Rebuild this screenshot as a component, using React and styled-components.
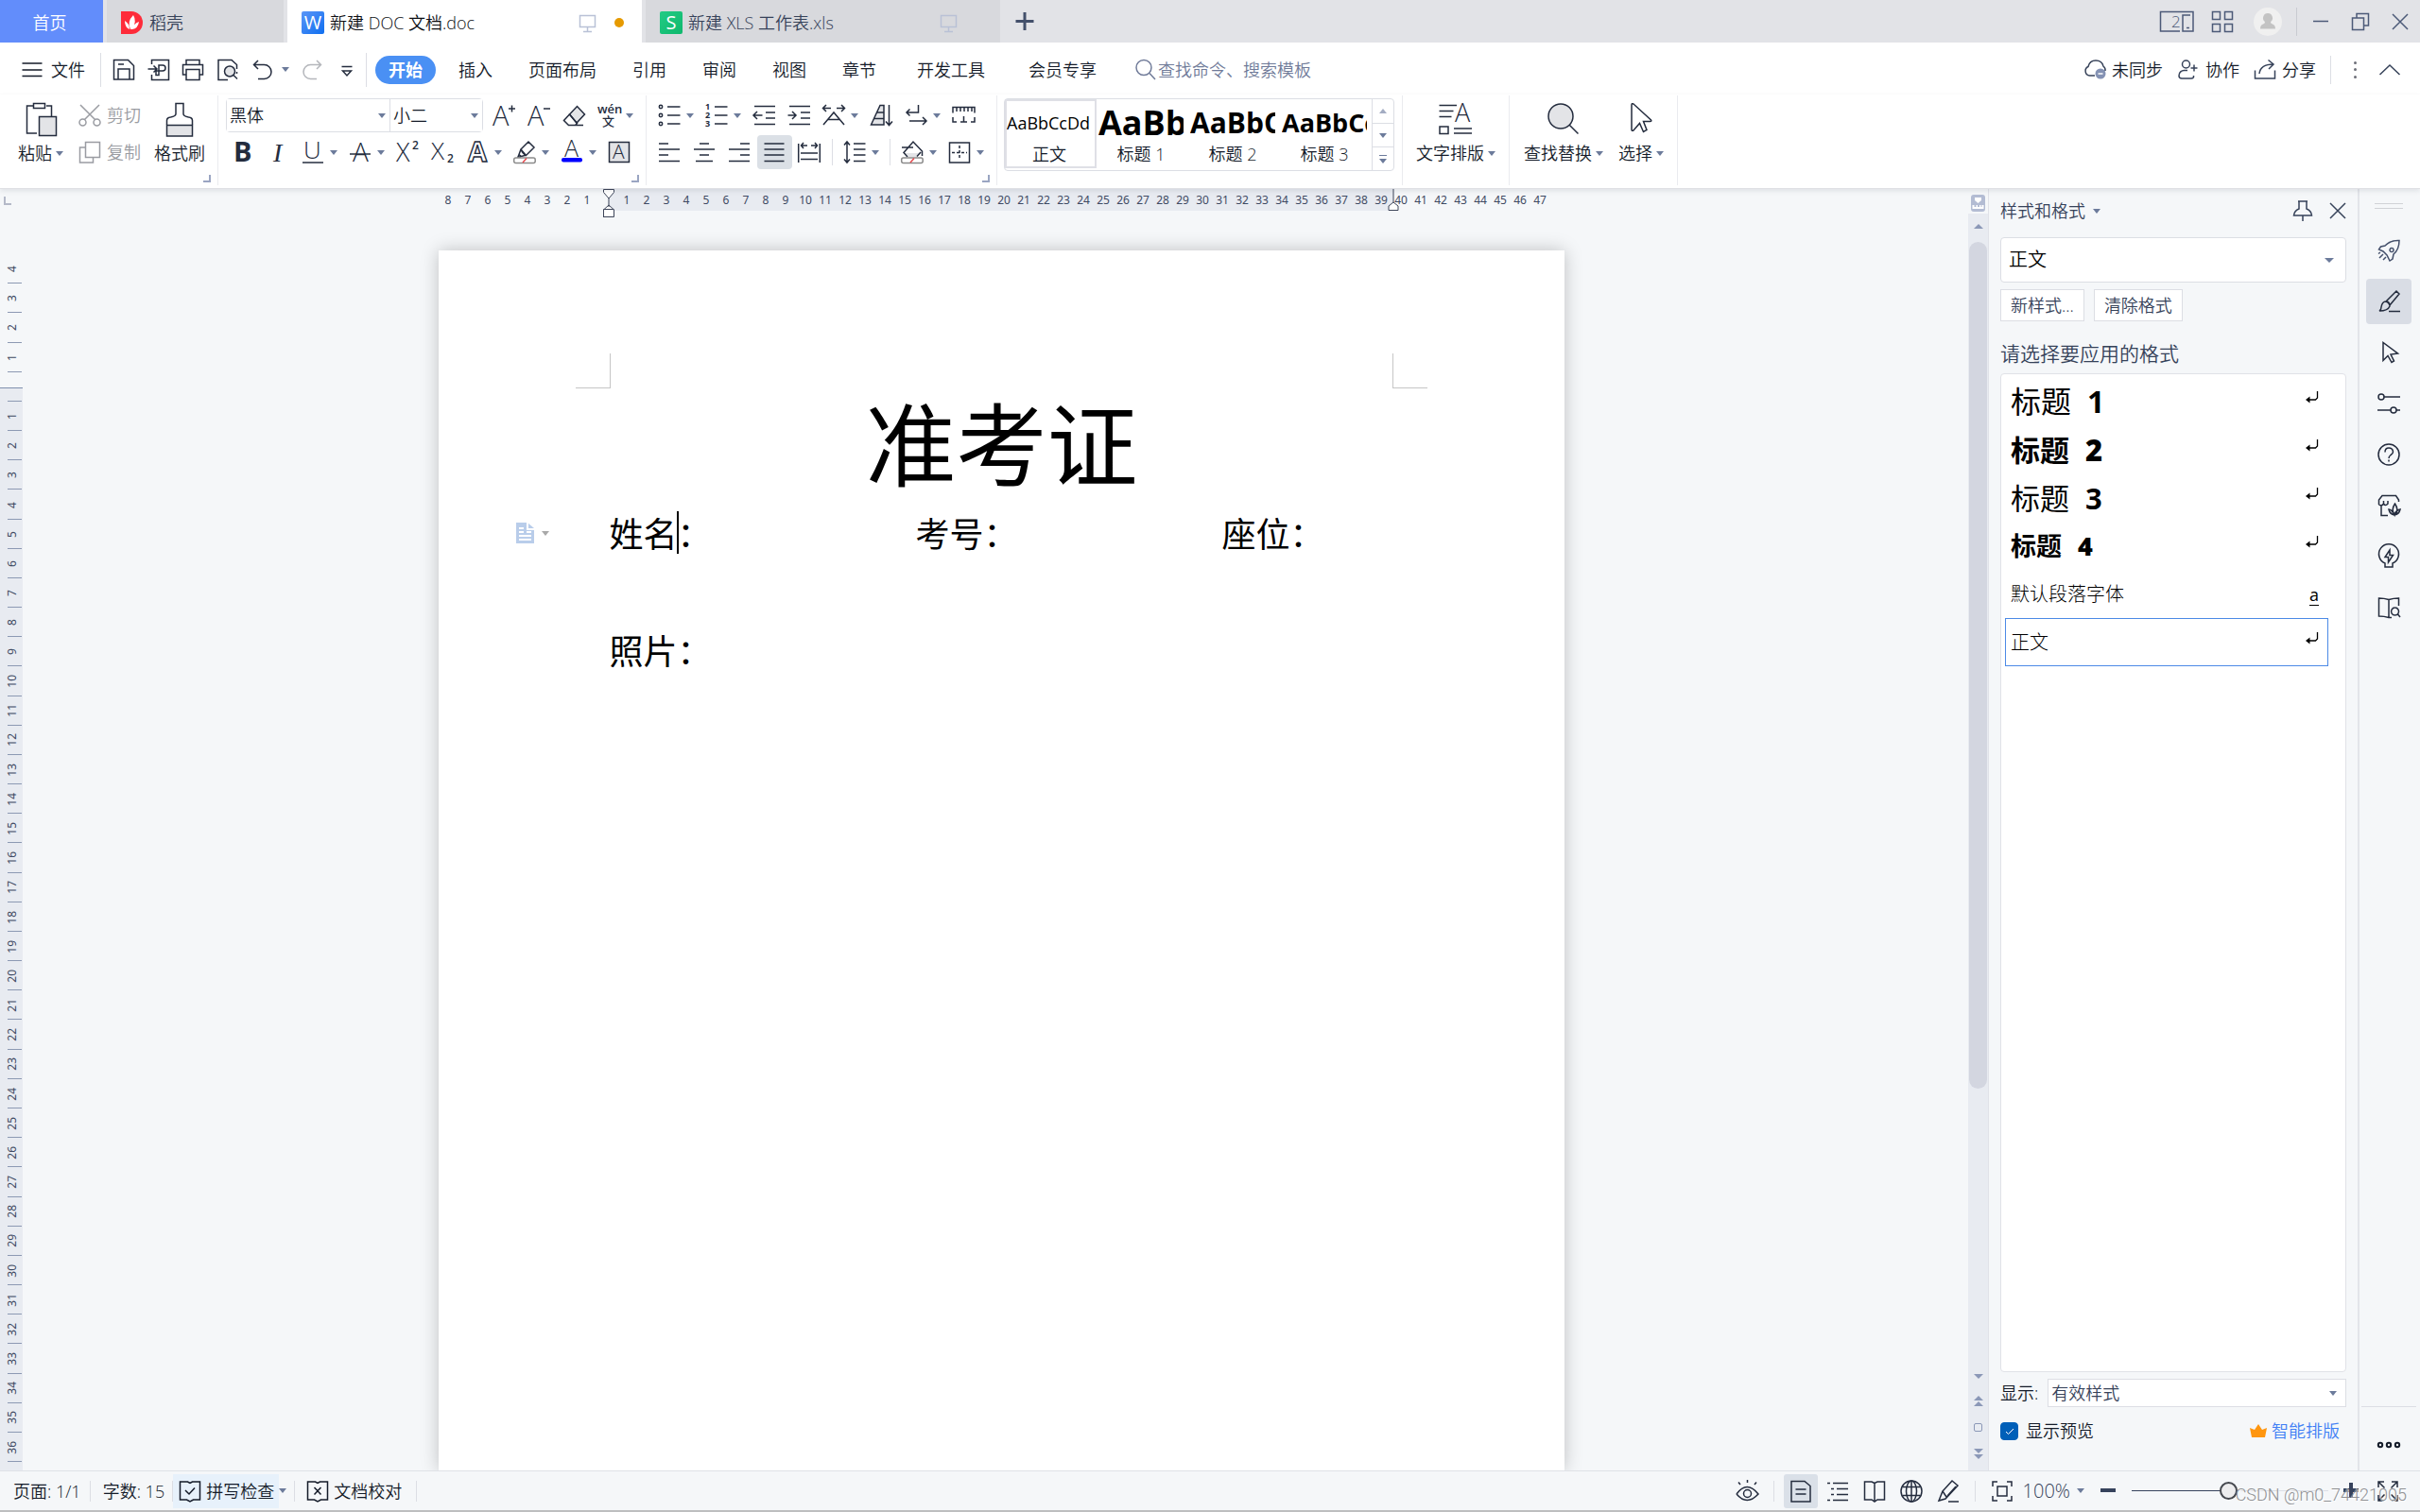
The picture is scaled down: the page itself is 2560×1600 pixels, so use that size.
import { useState } from 'react'
import styled, { createGlobalStyle, css } from 'styled-components'

const colors = {
  ink: '#242c3e',
  text: '#141b29',
  soft: '#364259',
  muted: '#707b99',
  caret: '#6c7b9b',
  disabled: '#9a9ca2',
  line: '#dcdee4',
  hair: '#eaebef',
  canvas: '#f5f7f9',
  band: '#e8ebf1',
  blue: '#4a90f4',
  home: '#628dfb',
}

const GlobalStyle = createGlobalStyle`
  * {
    box-sizing: border-box;
  }

  body {
    margin: 0;
    background: ${colors.canvas};
    color: ${colors.text};
    font: 350 18px/24px "Open Sans", "Noto Sans CJK SC", sans-serif;
  }

  button, input, select {
    font: inherit;
    color: inherit;
    border: 0;
    padding: 0;
    margin: 0;
    background: none;
  }

  h1, h2, p, ul {
    margin: 0;
    padding: 0;
    list-style: none;
    font-weight: inherit;
  }
`

/* ---------- icons ---------- */

const IconBase = styled.svg`
  display: block;
  flex: none;
  overflow: visible;
  fill: none;
  stroke: currentColor;
  stroke-width: ${({ $weight }) => $weight || 1.5};

  text {
    stroke: none;
    fill: currentColor;
    font-family: "Open Sans", "Noto Sans CJK SC", sans-serif;
    font-weight: 300;
  }
`

const SHADE = '#e3e4e7'

const icons = {
  menu: <path d="M1.5 5h21M1.5 12h21M1.5 18.500h21" />,
  save: <path d="M1.500 1.500h15l6 6v14.500h-21zM6 22V11h12v11M6 6h6" />,
  exportPdf: <path d="M4.500 6V1.500h18v21h-18V17M.5 11h9M6.500 7.500 10 11l-3.500 3.500M12 8.500V7h4q3 0 3 3t-3 3h-4v4.500h-3V13h3V8.500" />,
  print: <path d="M5 6V1.500h14V6M5 17H1.500V6.500h21V17H19M5 11.500h14v11H5z" />,
  preview: (
    <>
      <path d="M12 22.500H2V1.500h14l5.500 5V11M21.500 14v2" />
      <circle cx="14" cy="13.500" r="5.500" fill={SHADE} />
      <path d="m18 17.500 4 4" />
    </>
  ),
  undo: <path d="M7 2 2.500 6.500 7 11M3 6.500h10.500a7.500 7.500 0 0 1 0 15H7" />,
  redo: <path d="M17 2l4.500 4.500L17 11M21 6.500H10.500a7.500 7.500 0 0 0 0 15H17" />,
  more: <path d="M6.500 8.500h11M7.500 13l4.500 5 4.500-5z" />,
  search: (
    <>
      <circle cx="10" cy="9.500" r="8" />
      <path d="m16 15.500 6 6.500" />
    </>
  ),
  cloud: (
    <>
      <path d="M12 18H6.500a5 5 0 0 1-1.500-9.500Q6.500 2 13 2t8 6q2.500 2 2 5" />
      <circle cx="18" cy="16" r="5.500" fill="#8492b4" stroke="none" />
      <path d="M15.500 16h5" stroke="#fff" />
    </>
  ),
  person: <path d="M9.500 2a4 4 0 1 1 0 8 4 4 0 1 1 0-8M18 6.500v7M14.500 10h7M11 12.500H8a5.500 5.500 0 0 0-6 5.500q0 3 3 3h10q3 0 2.500-3" />,
  share: <path d="M1.500 12.500V21h21v-8.500M6 16Q7 6 21 6M15.500 1.500 21 6l-5 5" />,
  chevronUp: <path d="m1.500 17 10.500-10 10.500 10" />,
  paste: (
    <>
      <path d="M10 4H3.500v29H14M24 4h5.500v11" />
      <path d="M10.500 1.500h12v5h-12z" />
      <path d="M16.500 15.500h18v20h-18z" fill={SHADE} />
    </>
  ),
  cut: (
    <>
      <circle cx="4.500" cy="19.500" r="3.500" />
      <circle cx="19.500" cy="19.500" r="3.500" />
      <path d="M2 1l15.500 15.500M22 1 6.500 16.500" />
    </>
  ),
  copy: <path d="M7.500 1.500h15v16h-15zM7.500 7h-6v16h14v-5.500" />,
  brush: (
    <>
      <path d="M4.500 24v-4.500q0-3 4-3.500 5.500-1 5.500-3.500V1.500h8v11q0 2.500 5.500 3.500 4 .5 4 3.500V24" />
      <path d="M4.500 24.500h27v11.500h-27z" fill={SHADE} />
    </>
  ),
  grow: (
    <>
      <text x="0" y="23" fontSize="29">A</text>
      <path d="M17 5h7M20.500 1.500v7" />
    </>
  ),
  shrink: (
    <>
      <text x="0" y="23" fontSize="29">A</text>
      <path d="M17 5h7" />
    </>
  ),
  eraser: (
    <>
      <path d="m7.500 11 8-8.500 8 8.500-8.500 9z" fill={SHADE} />
      <path d="m7.500 11-6 6.500 5 5H22M7.500 11l8 9.500-2 2" />
    </>
  ),
  pinyin: (
    <>
      <text x="0" y="10" fontSize="13" style={{ fontWeight: 600 }}>wén</text>
      <text x="5" y="23" fontSize="13" style={{ fontWeight: 500 }}>文</text>
    </>
  ),
  bold: <text x="2" y="22" fontSize="29" style={{ fontWeight: 700 }}>B</text>,
  italic: <text x="7" y="22" fontSize="28" style={{ fontStyle: 'italic', fontFamily: 'Liberation Serif' }}>I</text>,
  underline: (
    <>
      <text x="2" y="19" fontSize="26">U</text>
      <path d="M1 23h22" />
    </>
  ),
  strike: (
    <>
      <text x="4" y="22" fontSize="28">A</text>
      <path d="M1 14h22" />
    </>
  ),
  superscript: (
    <>
      <text x="0" y="22" fontSize="27">X</text>
      <text x="17" y="9" fontSize="12" style={{ fontWeight: 600 }}>2</text>
    </>
  ),
  subscript: (
    <>
      <text x="0" y="20" fontSize="26">X</text>
      <text x="17" y="23" fontSize="12" style={{ fontWeight: 600 }}>2</text>
    </>
  ),
  outline: <text x="2" y="22" fontSize="29" style={{ fontWeight: 700, fill: '#fff', stroke: colors.ink, strokeWidth: 1.4 }}>A</text>,
  highlight: (
    <>
      <path d="m8 9 8-8 6 6-8.500 8.500zM8 9q2 5 5.500 6.500M8 9l-2 5.500 2.500 2L14 15M6 14.500 5 17h3" />
      <rect x=".7" y="18" width="22.500" height="5.500" rx="2" stroke="#8b8b8b" />
      <path d="m10 23 4-4.500" stroke="#e5484d" />
    </>
  ),
  fontColor: (
    <>
      <text x="4" y="17" fontSize="25">A</text>
      <rect x="1" y="18" width="22" height="4.500" rx="2" fill="#0000ff" stroke="none" />
    </>
  ),
  boxedA: (
    <>
      <path d="M1.500 1.500h21v21h-21z" fill={SHADE} />
      <text x="5" y="19" fontSize="21">A</text>
    </>
  ),
  bullets: (
    <>
      <circle cx="3" cy="3" r="1.700" />
      <circle cx="3" cy="12" r="1.700" />
      <circle cx="3" cy="21" r="1.700" />
      <path d="M10 3h13.500M10 12h13.500M10 21h13.500" />
    </>
  ),
  numbers: (
    <>
      <text x="0" y="6" fontSize="9" style={{ fontWeight: 700 }}>1</text>
      <text x="0" y="15" fontSize="9" style={{ fontWeight: 700 }}>2</text>
      <text x="0" y="24" fontSize="9" style={{ fontWeight: 700 }}>3</text>
      <path d="M10 3h13.500M10 12h13.500M10 21h13.500" />
    </>
  ),
  outdent: <path d="M2 2.500h22M14 9h10M14 15h10M2 21.500h22M10.500 12H1M5 8l-4 4 4 4" />,
  indent: <path d="M2 2.500h22M14 9h10M14 15h10M2 21.500h22M.5 12H9M5 8l4 4-4 4" />,
  scaleText: <path d="M1 22 12 9l11 13M6 16.500h12M9 4.500H1M4 1 .500 4.500 4 8M15 4.500h8M20 1l3.500 3.500L20 8" />,
  sort: (
    <>
      <path d="M1.500 22 11 1.500h4V22z" fill={SHADE} />
      <path d="M15 9H8M15 15.500H5M20.500 1v21M17 18.500l3.500 4 3.500-4" />
    </>
  ),
  wrap: <path d="M14.500 1v8H2M5.500 5.500 2 9l3.500 3.500M5 18h18M19 14l4 4-4 4" />,
  tabs: <path d="M1 9.500V3.500h23v6M5 4v4M9 4v4M13 4v4M17 4v4M21 4v4M1 14v5h4M12.500 13v6M9 19h7M24 14v5h-4" />,
  alignLeft: <path d="M1 3h10M1 9h22M1 15h10M1 21.500h22" />,
  alignCenter: <path d="M7 3h10M1 9h22M7 15h10M3 21.500h18" />,
  alignRight: <path d="M13 3h10M1 9h22M13 15h10M1 21.500h22" />,
  justify: <path d="M1.500 3h21M1.500 9h21M1.500 15h21M1.500 21.500h21" />,
  distribute: <path d="M.7 3v20M23.300 3v20M3 13h18M3 19.500h18M3.500 5H10M6 2 3.500 5 6 8M14 5h6.500M18 2l2.500 3L18 8" />,
  lineHeight: <path d="M4 1v22M1 4.500 4 1l3 3.500M1 19.500 4 23l3-3.500M11 3h12.500M11 9h12.500M11 15h12.500M11 21.500h12.500" />,
  bucket: (
    <>
      <path d="M4 13h17l-4 4H8z" fill={SHADE} stroke="none" />
      <path d="M7 17 3 12.500 13 1l9.500 10V16M1 7h12M21 12l-4 4.500" />
      <rect x=".7" y="18" width="22.500" height="5.500" rx="2" stroke="#8b8b8b" />
      <path d="m10 23 4-4.500" stroke="#e5484d" />
    </>
  ),
  borders: (
    <>
      <path d="M1.500 2h21v21h-21z" />
      <path d="M12 5v15M4 12.500h16" strokeDasharray="3 2" />
    </>
  ),
  typeset: (
    <>
      <path d="M.5 3.500H19M.5 9.500h15M.5 15.500h13M16 28h19M16 33h19M1 26h9v7.500H1z" />
      <text x="17" y="21" fontSize="27">A</text>
    </>
  ),
  find: (
    <>
      <circle cx="15" cy="15" r="13" fill={SHADE} />
      <path d="m24 24 9.500 9.500" />
    </>
  ),
  pointer: <path d="M8 3q0-2 2-1l18.500 17q1 1.500-1 1.500h-7l3.500 9-3.500 2-4-9-6.500 7.500q-2 1-2-1z" />,
  device: (
    <>
      <path d="M22 22H1.500V1.500h34.500V22H25V5h8" />
      <path d="M29 18.500h3" />
      <text x="13" y="18" fontSize="17">2</text>
    </>
  ),
  apps: <path d="M1.500 1.500h8v8h-8zM14.500 1.500h8v8h-8zM1.500 14.500h8v8h-8zM14.500 14.500h8v8h-8z" />,
  minimize: <path d="M4 11.500h16" />,
  restore: <path d="M3.500 8h12v12.500h-12zM8 8V3.500h12.500V16H16" />,
  close: <path d="m4 4 16 16M20 4 4 20" />,
  screen: <path d="M2.500 2.500h16v12h-16zM10.500 14.500v4.500M6 19.500h9" />,
  plus: <path d="M12 2v19M2.500 11.500h19" />,
  pin: <path d="M7 2h10M8 2v8q-5 2-5.500 7h19Q21 12 16 10V2M12 17v6" />,
  rocket: <path d="M8 7q6-6 15-5.500Q23 11 17 16l-1 5-3 2-3-6-4-4-4.500-2 2-3zM15 9.500a2 2 0 1 0 .1 0M6 16l-4 4M9 19l-3 3M3 14l-2 1.500" />,
  pen: <path d="m9 12 11-11 3 3-10 12M9 12q4 0 4 5-2 5-11 5 2-1 2-4 1-6 5-6M12 22.500h12M13 16q-1-3-4-4" />,
  arrow: <path d="M6 1.500v19l5-5 4 7 2.500-1.500-3.500-7 7.500-1z" />,
  sliders: (
    <>
      <circle cx="4" cy="5" r="3" />
      <circle cx="17" cy="19" r="3" />
      <path d="M7 5h17M0 19h14M20 19h4" />
    </>
  ),
  help: (
    <>
      <circle cx="12" cy="12" r="11" />
      <path d="M8 9.500q0-4.500 4-4.500t4.500 4q0 2-2.500 3.500-2 1.500-2 3.500M12 17.500v2" />
    </>
  ),
  store: <path d="M4 12v10.500h7M1.500 11V6L5 1.500h14.500l3 4.500v2M1.500 11q3 2 5-1 2 3 4.500 0V7M6.500 10V7M17.500 21q-3-5 1-11 4 6 1 11M18 22q-5-1-6-6 3 0 6 6 1-5 6-6-1 5-6 6z" />,
  bulb: <path d="M8 19a10.500 10.500 0 1 1 8 0v4H8zM13 5l-5 7.500h3.500V18l5-7.500h-3.500z" />,
  bookSearch: <path d="M12 3.500v19M12 3.500Q7 2 1.500 2v19Q7 21 12 22.500h3M12 3.500Q17 2 22.500 2v8M18.500 12a4 4 0 1 0 .1 0M21.500 19l2.500 3" />,
  dots: (
    <>
      <circle cx="3" cy="12" r="2.200" />
      <circle cx="12" cy="12" r="2.200" />
      <circle cx="21" cy="12" r="2.200" />
    </>
  ),
  spell: <path d="M9.500 2H1.500v19h7l3.500 2 3.500-2h7V2h-8L12 3.500zM7 11l4 4 6-6.500" />,
  proof: <path d="M9.500 2H1.500v19h7l3.500 2 3.500-2h7V2h-8L12 3.500zM8.500 8l7 7.500M15.500 8l-7 7.500" />,
  eye: (
    <>
      <path d="M1 15q11-15 23 0-12 13-23 0M12.500 3V0M5 5 3 2.500M20 5l2-2.500" />
      <circle cx="12.500" cy="14.500" r="4" />
    </>
  ),
  pageView: <path d="M2 1.500h14l6 5V23H2zM6.500 10h11M6.500 15h11" />,
  outlineView: <path d="M1 3.500h3M7 3.500h16M5 9.500h3M11 9.500h12M5 15.500h3M11 15.500h12M1 21.500h3M7 21.500h16" />,
  book: <path d="M12 3.500v19M12 3.500 9 2H1.500v19H9l3 2 3-2h7.500V2H15z" />,
  globe: (
    <>
      <circle cx="12" cy="12" r="11" />
      <ellipse cx="12" cy="12" rx="5.500" ry="11" />
      <path d="M12 1v22M2.500 7.500h19M2.500 16.500h19" />
    </>
  ),
  write: <path d="m6 12 10-11 6 5L9 20l-7 2zM6 12l4 6M11 17l9-10M12 23h11" />,
  fit: <path d="M2 7V2h5M17 2h5v5M22 17v5h-5M7 22H2v-5M7 7h10v10H7z" />,
  full: <path d="M2 8V2h6M16 2h6v6M22 16v6h-6M8 22H2v-6M2 2l6.500 6.500M22 2l-6.500 6.500M22 22l-6.500-6.500M2 22l6.500-6.500" />,
}

const Icon = ({ name, size = 24, width, weight }) => (
  <IconBase
    $weight={weight}
    width={width || size}
    height={size}
    viewBox={`0 0 ${width || size} ${size}`}
    aria-hidden="true"
  >
    {icons[name]}
  </IconBase>
)

const CaretSvg = styled.svg`
  display: block;
  flex: none;
  width: ${({ $big }) => ($big ? 10 : 8)}px;
  height: 5px;
  fill: ${({ $color }) => $color || colors.caret};
  transform: ${({ $up }) => ($up ? 'rotate(180deg)' : 'none')};
`

const Caret = props => (
  <CaretSvg viewBox="0 0 8 5" preserveAspectRatio="none" aria-hidden="true" {...props}>
    <path d="M0 0h8L4 5z" />
  </CaretSvg>
)

/* ---------- title bar ---------- */

const Window = styled.div`
  min-height: 100vh;
  display: flex;
  flex-direction: column;
`

const TitleBar = styled.header`
  height: 45px;
  display: flex;
  align-items: stretch;
  background: #e2e3e7;
`

const Tabs = styled.nav`
  display: flex;
  gap: 4px;
`

const FileTab = styled.button`
  width: ${({ $width }) => $width}px;
  padding: 3px 16px 0 15px;
  display: flex;
  align-items: center;
  gap: 6px;
  color: ${({ $active }) => ($active ? '#0d0f14' : colors.soft)};
  background: ${({ $active }) => ($active ? '#fff' : '#d8d9dd')};

  ${({ $home }) => $home && css`
    justify-content: center;
    padding-right: 19px;
    color: #fff;
    background: ${colors.home};
  `}
`

const TabState = styled.span`
  margin-left: auto;
  display: flex;
  align-items: center;
  gap: 18px;
  padding-right: ${({ $pad }) => $pad}px;
  color: #b9c1d6;
`

const Dot = styled.i`
  width: 10px;
  height: 10px;
  border-radius: 50%;
  background: #e69a00;
`

const AddTab = styled.button`
  width: 52px;
  display: grid;
  place-items: center;
  color: #43506b;
`

const WindowTools = styled.div`
  margin-left: auto;
  display: flex;
  align-items: center;
  color: #4c5a78;
`

const TitleButton = styled.button`
  padding: 0 9px;
  height: 45px;
  display: grid;
  place-items: center;
`

const Avatar = styled.button`
  width: 30px;
  height: 30px;
  margin: 0 15px 0 12px;
  border-radius: 50%;
  display: grid;
  place-items: center;
  background: #f0f0f0;
`

const WindowButton = styled.button`
  width: 42px;
  height: 45px;
  display: grid;
  place-items: center;
`

const Rule = styled.span`
  width: 1px;
  height: ${({ $height }) => $height || 30}px;
  margin: ${({ $margin }) => $margin || '0'};
  background: ${({ $color }) => $color || colors.line};
  flex: none;
`

const LogoDocer = () => (
  <svg width="24" height="24" viewBox="0 0 24 24" aria-hidden="true">
    <path d="M0 0h11a12 12 0 0 1 0 24H0z" fill="#fe2c3a" />
    <path d="M10 19Q6 11 13 4q4 6-1 15M9 19q-5-2-5-9 5 3 5 9M12 19q1-6 7-8-1 7-7 8" fill="#fff" />
  </svg>
)

const Badge = styled.span`
  width: 24px;
  height: 24px;
  border-radius: 2px;
  display: grid;
  place-items: center;
  color: #fff;
  font: 400 20px/24px "Open Sans", sans-serif;
  background: ${({ $kind }) => ($kind === 'doc'
    ? 'linear-gradient(135deg, #5b96f7, #0f6ff0)'
    : 'linear-gradient(135deg, #23cb85, #0fb86d)')};
`

const TabName = styled.span`
  white-space: nowrap;
`

const Title = () => (
  <TitleBar>
    <Tabs aria-label="文档标签">
      <FileTab $home $width={109}>首页</FileTab>
      <FileTab $width={187}><LogoDocer /><TabName>稻壳</TabName></FileTab>
      <FileTab $active $width={375}>
        <Badge $kind="doc">W</Badge>
        <TabName>新建 DOC 文档.doc</TabName>
        <TabState $pad={3}><Icon name="screen" size={21} /><Dot /></TabState>
      </FileTab>
      <FileTab $width={375}>
        <Badge $kind="xls">S</Badge>
        <TabName>新建 XLS 工作表.xls</TabName>
        <TabState $pad={28}><Icon name="screen" size={21} /></TabState>
      </FileTab>
    </Tabs>
    <AddTab aria-label="新建标签"><Icon name="plus" size={24} weight={3} /></AddTab>
    <WindowTools>
      <TitleButton aria-label="窗口"><Icon name="device" width={37} /></TitleButton>
      <TitleButton aria-label="应用"><Icon name="apps" /></TitleButton>
      <Avatar aria-label="账号">
        <svg width="18" height="18" viewBox="0 0 18 18" fill="#c3c3c3" aria-hidden="true">
          <path d="M9 0a5 5 0 0 1 3 9q0 2 2 2.500 3 1 3 5H1q0-4 3-5Q6 11 6 9a5 5 0 0 1 3-9" />
        </svg>
      </Avatar>
      <Rule $color="#c9cbd1" $margin="0 4px 0 0" />
      <WindowButton aria-label="最小化"><Icon name="minimize" /></WindowButton>
      <WindowButton aria-label="还原"><Icon name="restore" /></WindowButton>
      <WindowButton aria-label="关闭"><Icon name="close" /></WindowButton>
    </WindowTools>
  </TitleBar>
)

/* ---------- menu row ---------- */

const MenuBar = styled.div`
  height: 55px;
  display: flex;
  align-items: center;
  padding: 2px 20px 0 22px;
  background: #fff;
`

const FileMenu = styled.button`
  display: flex;
  align-items: center;
  gap: 8px;
  margin-right: 16px;
`

const QuickTools = styled.div`
  width: 280px;
  padding: 0 8px 0 12px;
  display: flex;
  align-items: center;
  justify-content: space-between;
  color: ${colors.ink};
`

const QuickButton = styled.button`
  display: flex;
  align-items: center;
  gap: 8px;
  color: ${({ $off }) => ($off ? '#b4b6bb' : 'inherit')};
`

const RibbonTab = styled.button`
  height: 30px;
  padding: 0 19px;
  margin-left: ${({ $gap }) => $gap || 0}px;
  white-space: nowrap;

  ${({ $active }) => $active && css`
    padding: 0 14px;
    margin: 0 5px 0 9px;
    border-radius: 15px;
    font-weight: 700;
    color: #fff;
    background: ${colors.blue};
  `}
`

const Search = styled.label`
  display: flex;
  align-items: center;
  gap: 1px;
  margin-left: 21px;
  color: ${colors.muted};

  input {
    width: 180px;
    outline: 0;
  }

  input::placeholder {
    color: ${colors.muted};
    opacity: 1;
  }
`

const MenuRight = styled.div`
  margin-left: auto;
  display: flex;
  align-items: center;
  gap: 15px;
  color: ${colors.soft};
`

const LinkButton = styled.button`
  display: flex;
  align-items: center;
  gap: 6px;

  span {
    color: ${colors.text};
  }
`

const Dots = styled.button`
  width: 20px;
  height: 18px;
  display: flex;
  flex-direction: column;
  align-items: center;
  justify-content: space-between;

  i {
    width: 3px;
    height: 3px;
    border-radius: 50%;
    background: #6d6f78;
  }
`

const ribbonTabs = [
  ['插入'], ['页面布局'], ['引用'], ['审阅'], ['视图'], ['章节'], ['开发工具', 5], ['会员专享', 8],
]

const Menu = () => (
  <MenuBar>
    <FileMenu><Icon name="menu" /><span>文件</span></FileMenu>
    <Rule $height={36} />
    <QuickTools>
      <QuickButton aria-label="保存"><Icon name="save" /></QuickButton>
      <QuickButton aria-label="输出为PDF"><Icon name="exportPdf" /></QuickButton>
      <QuickButton aria-label="打印"><Icon name="print" /></QuickButton>
      <QuickButton aria-label="打印预览"><Icon name="preview" /></QuickButton>
      <QuickButton aria-label="撤销"><Icon name="undo" /><Caret /></QuickButton>
      <QuickButton aria-label="恢复" $off><Icon name="redo" /></QuickButton>
      <QuickButton aria-label="更多"><Icon name="more" /></QuickButton>
    </QuickTools>
    <Rule $height={36} />
    <RibbonTab $active>开始</RibbonTab>
    {ribbonTabs.map(([label, gap]) => <RibbonTab key={label} $gap={gap}>{label}</RibbonTab>)}
    <Search>
      <Icon name="search" />
      <input type="search" placeholder="查找命令、搜索模板" aria-label="查找命令、搜索模板" />
    </Search>
    <MenuRight>
      <LinkButton><Icon name="cloud" /><span>未同步</span></LinkButton>
      <LinkButton><Icon name="person" /><span>协作</span></LinkButton>
      <LinkButton><Icon name="share" /><span>分享</span></LinkButton>
      <Rule $height={30} />
      <Dots aria-label="更多"><i /><i /><i /></Dots>
      <QuickButton aria-label="收起功能区"><Icon name="chevronUp" /></QuickButton>
    </MenuRight>
  </MenuBar>
)

/* ---------- ribbon ---------- */

const RibbonBar = styled.div`
  display: flex;
  height: 100px;
  padding: 1px 0 3px;
  background: #fff;
  border-bottom: 1px solid #dfe0e4;
  box-shadow: 0 2px 5px rgba(30, 40, 60, 0.1);
  position: relative;
  z-index: 1;
`

const Group = styled.section`
  position: relative;
  display: flex;
  align-items: flex-start;
  gap: ${({ $gap }) => $gap || 0}px;
  padding: ${({ $pad }) => $pad};
  border-right: 1px solid ${colors.hair};
`

const Launcher = styled.button`
  position: absolute;
  right: 7px;
  bottom: 3px;
  width: 8px;
  height: 8px;
  border: solid #9aa5c2;
  border-width: 0 2px 2px 0;
`

const BigButton = styled.button`
  padding-top: 4px;
  display: flex;
  flex-direction: column;
  align-items: center;
  gap: 6px;
  white-space: nowrap;
  color: ${colors.ink};

  span {
    display: flex;
    align-items: center;
    gap: 4px;
    color: ${colors.text};
  }
`

const Stack = styled.div`
  display: flex;
  flex-direction: column;
  gap: 3px;
  margin: 0 ${({ $right }) => $right || 0}px 0 ${({ $left }) => $left || 0}px;
`

const Row = styled.div`
  height: 36px;
  display: flex;
  align-items: center;
`

const TextButton = styled.button`
  height: 36px;
  display: flex;
  align-items: center;
  gap: 6px;
  color: ${colors.disabled};
`

const ToolButton = styled.button`
  width: ${({ $menu }) => ($menu ? 50 : 37)}px;
  height: 36px;
  padding-left: 6px;
  display: flex;
  align-items: center;
  gap: 6px;
  border-radius: 4px;
  color: ${colors.ink};
  background: ${({ $on }) => ($on ? '#dbe0e6' : 'none')};
`

const Combos = styled.div`
  display: flex;
  height: 36px;
  margin-right: 4px;
  border: 1px solid ${colors.line};
  border-radius: 4px;
`

const SelectWrap = styled.div`
  display: grid;
  align-items: center;
  width: ${({ $width }) => $width || 'auto'};
  height: ${({ $height }) => $height || 'auto'};
  flex: ${({ $grow }) => ($grow ? 1 : 'none')};
  border: ${({ $boxed }) => ($boxed ? `1px solid ${colors.line}` : '0')};
  border-radius: ${({ $boxed }) => $boxed || '0'};
  background: #fff;
  font-size: ${({ $large }) => ($large ? 20 : 18)}px;

  & + & {
    border-left: 1px solid ${colors.line};
  }

  select {
    grid-area: 1 / 1;
    width: 100%;
    height: 100%;
    padding-left: ${({ $inset }) => $inset || 3}px;
    appearance: none;
    outline: 0;
    color: ${({ $large }) => ($large ? '#000' : 'inherit')};
  }

  svg {
    grid-area: 1 / 1;
    justify-self: end;
    margin-right: ${({ $end }) => $end || 4}px;
    pointer-events: none;
  }
`

const Tool = ({ icon, label, menu, on }) => (
  <ToolButton $menu={menu} $on={on} aria-label={label}>
    <Icon name={icon} />
    {menu && <Caret />}
  </ToolButton>
)

const Gallery = styled.div`
  display: flex;
  height: 77px;
  border: 1px solid ${colors.line};
  border-radius: 4px;
`

const StyleCell = styled.button`
  width: 97px;
  height: 73px;
  padding: 0 3px 0 0;
  border: 2px solid ${({ $active }) => ($active ? '#dfe0e6' : 'transparent')};
  display: flex;
  flex-direction: column;
  align-items: stretch;

  em {
    height: 44px;
    overflow: hidden;
    text-align: left;
    white-space: nowrap;
    color: #000;
    font-style: normal;
    font-weight: ${({ $size }) => ($size > 20 ? 700 : 400)};
    font-size: ${({ $size }) => $size}px;
    line-height: 46px;
  }
`

const GalleryNav = styled.div`
  width: 23px;
  border-left: 1px solid ${colors.line};
  display: grid;
  grid-template-rows: repeat(3, 1fr);

  button {
    display: grid;
    place-content: center;
    justify-items: center;
    gap: 3px;
  }

  button + button {
    border-top: 1px solid ${colors.line};
  }
`

const Bar = styled.i`
  width: 8px;
  height: 1px;
  background: ${colors.caret};
`

const gallery = [
  ['正文', 18], ['标题 1', 36], ['标题 2', 30], ['标题 3', 27],
]

const Ribbon = () => {
  const [style, setStyle] = useState('正文')

  return (
    <RibbonBar>
      <Group $pad="3px 13px 0 19px">
        <BigButton><Icon name="paste" size={36} /><span>粘贴<Caret /></span></BigButton>
        <Stack $left={16} $right={14}>
          <TextButton><Icon name="cut" />剪切</TextButton>
          <TextButton><Icon name="copy" />复制</TextButton>
        </Stack>
        <BigButton><Icon name="brush" size={36} /><span>格式刷</span></BigButton>
        <Launcher aria-label="剪贴板设置" />
      </Group>

      <Group $pad="3px 7px 0 8px">
        <Stack>
          <Row>
            <Combos>
              <SelectWrap $width="172px">
                <select aria-label="字体"><option>黑体</option></select>
                <Caret />
              </SelectWrap>
              <SelectWrap $width="98px">
                <select aria-label="字号"><option>小二</option></select>
                <Caret />
              </SelectWrap>
            </Combos>
            <Tool icon="grow" label="增大字号" />
            <Tool icon="shrink" label="减小字号" />
            <Tool icon="eraser" label="清除格式" />
            <Tool icon="pinyin" label="拼音指南" menu />
          </Row>
          <Row>
            <Tool icon="bold" label="加粗" />
            <Tool icon="italic" label="倾斜" />
            <Tool icon="underline" label="下划线" menu />
            <Tool icon="strike" label="删除线" menu />
            <Tool icon="superscript" label="上标" />
            <Tool icon="subscript" label="下标" />
            <Tool icon="outline" label="文字效果" menu />
            <Tool icon="highlight" label="突出显示" menu />
            <Tool icon="fontColor" label="字体颜色" menu />
            <Tool icon="boxedA" label="字符底纹" />
          </Row>
        </Stack>
        <Launcher aria-label="字体设置" />
      </Group>

      <Group $pad="3px 7px 0 6px">
        <Stack>
          <Row>
            <Tool icon="bullets" label="项目符号" menu />
            <Tool icon="numbers" label="编号" menu />
            <Tool icon="outdent" label="减少缩进" />
            <Tool icon="indent" label="增加缩进" />
            <Tool icon="scaleText" label="中文版式" menu />
            <Tool icon="sort" label="排序" />
            <Tool icon="wrap" label="段落标记" menu />
            <Tool icon="tabs" label="制表位" />
          </Row>
          <Row>
            <Tool icon="alignLeft" label="左对齐" />
            <Tool icon="alignCenter" label="居中" />
            <Tool icon="alignRight" label="右对齐" />
            <Tool icon="justify" label="两端对齐" on />
            <Tool icon="distribute" label="分散对齐" />
            <Rule $height={28} $margin="0 5px" />
            <Tool icon="lineHeight" label="行距" menu />
            <Rule $height={28} $margin="0 5px" />
            <Tool icon="bucket" label="底纹颜色" menu />
            <Tool icon="borders" label="边框" menu />
          </Row>
        </Stack>
        <Launcher aria-label="段落设置" />
      </Group>

      <Group $pad="3px 8px 0 7px">
        <Gallery>
          {gallery.map(([name, size]) => (
            <StyleCell key={name} $size={size} $active={name === style} onClick={() => setStyle(name)}>
              <em>AaBbCcDd</em>
              <span>{name}</span>
            </StyleCell>
          ))}
          <GalleryNav>
            <button aria-label="上一行"><Caret $up $color="#a3acc2" /></button>
            <button aria-label="下一行"><Caret /></button>
            <button aria-label="展开"><Bar /><Caret /></button>
          </GalleryNav>
        </Gallery>
      </Group>

      <Group $pad="3px 14px 0">
        <BigButton><Icon name="typeset" size={36} /><span>文字排版<Caret /></span></BigButton>
      </Group>

      <Group $pad="3px 14px 0 15px" $gap={16}>
        <BigButton><Icon name="find" size={36} /><span>查找替换<Caret /></span></BigButton>
        <BigButton><Icon name="pointer" size={36} /><span>选择<Caret /></span></BigButton>
      </Group>
    </RibbonBar>
  )
}

/* ---------- document ---------- */

const Main = styled.main`
  flex: 1;
  display: flex;
`

const VRuler = styled.div`
  width: 24px;
  display: flex;
  flex-direction: column;
  color: #3f4a63;
  font: 400 12px/14px "Noto Sans", sans-serif;
`

const VCorner = styled.div`
  height: 69px;
  padding: 8px 0 0 4px;

  i {
    display: block;
    width: 8px;
    height: 9px;
    border: solid #b4b9c8;
    border-width: 0 0 2px 2px;
  }
`

const VCell = styled.div`
  flex: 1;
  display: flex;
  align-items: center;
  padding-left: 6px;
  background: ${({ $inside }) => ($inside ? colors.band : 'transparent')};
  background: ${({ $zero }) => $zero && `linear-gradient(transparent 50%, #7f90ae 50%, #7f90ae calc(50% + 1px), ${colors.band} calc(50% + 1px))`};
  position: relative;

  span {
    writing-mode: vertical-rl;
    transform: rotate(180deg);
  }

  &::after {
    content: '';
    position: absolute;
    left: 8px;
    right: 1px;
    bottom: 0;
    height: 1px;
    background: #8c99b3;
  }
`

const VTail = styled.div`
  height: 9px;
  background: ${colors.band};
`

const DocArea = styled.div`
  flex: 1;
  padding-left: 12px;
  display: flex;
  flex-direction: column;
  align-items: center;
  overflow: hidden;
`

const HRuler = styled.div`
  position: relative;
  width: 1191px;
  height: 23px;
  margin-bottom: 42px;
  display: flex;
  align-items: center;
  background: linear-gradient(to right, transparent 179px, ${colors.band} 179px, ${colors.band} 1010px, transparent 1010px);
  color: #3f4a63;
  font: 400 12px/23px "Noto Sans", sans-serif;

  span {
    flex: none;
    width: 21px;
    text-align: center;
  }
`

const Marker = styled.svg`
  position: absolute;
  top: 0;
  left: ${({ $left }) => $left}px;
  fill: #fff;
  stroke: #3d4559;
`

const Sheet = styled.article`
  position: relative;
  flex: 1;
  width: 1191px;
  padding: 109px 180px 0 181px;
  background: #fff;
  box-shadow: 0 0 18px rgba(0, 0, 0, 0.22);
  color: #000;
  font: 400 36px/62px "Noto Sans CJK SC", sans-serif;

  &::before, &::after {
    content: '';
    position: absolute;
    top: 109px;
    width: 36px;
    height: 36px;
    border: solid #c6c6c6;
  }

  &::before {
    left: 145px;
    border-width: 0 1px 1px 0;
  }

  &::after {
    right: 145px;
    border-width: 0 0 1px 1px;
  }
`

const DocTitle = styled.h1`
  margin: 29px 0 4px;
  font-size: 96px;
  line-height: 125px;
  text-align: center;
  white-space: nowrap;
`

const Fields = styled.p`
  display: grid;
  grid-template-columns: 324px 324px 1fr;
  height: 62px;

  > span {
    display: flex;
    align-items: center;
  }
`

const TextCursor = styled.i`
  width: 2px;
  height: 45px;
  margin: 0 -1px;
  background: #000;
`

const ParagraphTool = styled.button`
  position: absolute;
  left: 82px;
  top: 288px;
  display: flex;
  align-items: center;
  gap: 8px;
`

const left = [8, 7, 6, 5, 4, 3, 2, 1]
const right = Array.from({ length: 47 }, (_, i) => i + 1)
const vertical = [4, 3, 2, 1, 0, ...Array.from({ length: 36 }, (_, i) => i + 1)]

const Document = () => (
  <>
    <VRuler aria-hidden="true">
      <VCorner><i /></VCorner>
      {vertical.map((n, i) => (
        <VCell key={i} $inside={i > 4} $zero={n === 0}>{n > 0 && <span>{n}</span>}</VCell>
      ))}
      <VTail />
    </VRuler>
    <DocArea>
      <HRuler aria-hidden="true">
        {left.map(n => <span key={n}>{n}</span>)}
        <span />
        {right.map(n => <span key={n}>{n}</span>)}
        <Marker $left={174} width="12" height="31">
          <path d="M.5.5h11v3L6 10 .5 3.500zM6 10v9M.5 30V22L6 17l5.500 5v7.500H.5v-8h11" />
        </Marker>
        <Marker $left={1004} width="12" height="24">
          <path d="M6 0v14M1 22.500V18l5-4 5 4v4.500z" />
        </Marker>
      </HRuler>
      <Sheet>
        <DocTitle>准考证</DocTitle>
        <Fields>
          <span>姓名<TextCursor />：</span>
          <span>考号：</span>
          <span>座位：</span>
        </Fields>
        <Fields />
        <Fields><span>照片：</span></Fields>
        <ParagraphTool aria-label="段落布局">
          <svg width="19" height="22" viewBox="0 0 19 22" aria-hidden="true">
            <path d="M0 0h12l7 6v16H0z" fill="#b9cdea" />
            <path d="M12 0v7h7M3 6h5M3 10h5M3 14h13M3 18h13M11 10h5" stroke="#fff" strokeWidth="2" fill="none" />
          </svg>
          <Caret $color="#a9a9a9" />
        </ParagraphTool>
      </Sheet>
    </DocArea>
  </>
)

/* ---------- scroll bar ---------- */

const ScrollBar = styled.div`
  width: 22px;
  border-right: 1px solid #e0e2e8;
  display: flex;
  flex-direction: column;
`

const RulerToggle = styled.button`
  height: 26px;
  padding: 5px 3px 3px;
`

const Track = styled.div`
  flex: 1;
  display: flex;
  flex-direction: column;
  align-items: center;
  padding: 11px 0 12px;
  background: ${colors.band};

  button {
    display: grid;
    gap: 1px;
  }
`

const Thumb = styled.div`
  width: 19px;
  flex: 895;
  margin-top: 14px;
  border-radius: 10px;
  background: #d3d6e0;
`

const ScrollRest = styled.div`
  flex: 302;
`

const ScrollEnds = styled.div`
  display: flex;
  flex-direction: column;
  align-items: center;
  gap: 18px;
`

const Browse = styled.i`
  width: 9px;
  height: 9px;
  border: 1px solid #8b98b7;
  border-radius: 2px;
`

const Scroll = () => (
  <ScrollBar>
    <RulerToggle aria-label="标尺">
      <svg width="15" height="18" viewBox="0 0 15 18" aria-hidden="true">
        <rect width="15" height="18" rx="3" fill="#b3bcd3" />
        <path d="M4 3h7v3L7.500 9 4 6zM1.500 15v-4h2v2h2v-2h1.500v2h2v-2h1.500v2h1v-2h2v4z" fill="#fff" />
      </svg>
    </RulerToggle>
    <Track>
      <button aria-label="向上"><Caret $up $big $color="#8b98b7" /></button>
      <Thumb />
      <ScrollRest />
      <ScrollEnds>
        <button aria-label="向下"><Caret $big $color="#8b98b7" /></button>
        <button aria-label="上一页"><Caret $up $big $color="#8b98b7" /><Caret $up $big $color="#8b98b7" /></button>
        <button aria-label="浏览对象"><Browse /></button>
        <button aria-label="下一页"><Caret $big $color="#8b98b7" /><Caret $big $color="#8b98b7" /></button>
      </ScrollEnds>
    </Track>
  </ScrollBar>
)

/* ---------- styles panel ---------- */

const Panel = styled.aside`
  width: 392px;
  padding: 9px 12px 30px;
  display: flex;
  flex-direction: column;
  border-right: 2px solid #e2e4e9;
  color: ${colors.soft};
`

const PanelHead = styled.div`
  display: flex;
  align-items: center;
  gap: 13px;
  height: 28px;
  margin-bottom: 14px;

  h2 {
    flex: 1;
    display: flex;
    align-items: center;
    gap: 8px;
    font-size: 18px;
  }

  button:last-child {
    margin-right: -3px;
  }
`

const PanelButtons = styled.div`
  display: flex;
  gap: 10px;
  margin: 7px 0 20px;
`

const PlainButton = styled.button`
  height: 34px;
  padding: 0 10px;
  border: 1px solid ${colors.line};
  background: #fff;
`

const ListLabel = styled.p`
  font-size: 21px;
  line-height: 28px;
  margin-bottom: 7px;
`

const StyleList = styled.ul`
  flex: 1;
  padding: 3px 18px 0 4px;
  border: 1px solid #e0e2e7;
  border-radius: 4px;
  background: #fff;
  color: #000;
`

const StyleItem = styled.li`
  height: 51px;
  padding: 0 9px 0 5px;
  display: flex;
  align-items: center;
  justify-content: space-between;
  border: 1px solid ${({ $selected }) => ($selected ? '#4c8ae6' : 'transparent')};
  font-size: ${({ $size }) => $size}px;
  font-weight: ${({ $bold, $size }) => ($bold ? 700 : $size > 20 ? 400 : 300)};
  line-height: 48px;

  b {
    margin-left: 17px;
  }
`

const CharMark = styled.span`
  font-size: 18px;
  font-weight: 400;
  line-height: 20px;
  text-decoration: underline;
  text-underline-offset: 4px;
`

const Field = styled.div`
  display: flex;
  align-items: center;
  justify-content: space-between;
  gap: 10px;
  margin-top: ${({ $top }) => $top}px;

  label {
    display: flex;
    align-items: center;
    gap: 8px;
    color: ${colors.text};
  }
`

const Check = styled.input`
  appearance: none;
  width: 19px;
  height: 19px;
  border: 1px solid #005fb8;
  border-radius: 4px;

  &:checked {
    background: #005fb8 url("data:image/svg+xml,%3Csvg xmlns='http://www.w3.org/2000/svg' viewBox='0 0 19 19'%3E%3Cpath d='M6 10l2.500 2.500L14 7' fill='none' stroke='white'/%3E%3C/svg%3E") center / 19px;
  }
`

const SmartLink = styled.a`
  display: flex;
  align-items: center;
  gap: 5px;
  margin-right: 7px;
  color: #3f7ff5;
  text-decoration: none;
`

const styleItems = [
  { name: '标题', level: 1, size: 32 },
  { name: '标题', level: 2, size: 31, bold: true },
  { name: '标题', level: 3, size: 31 },
  { name: '标题', level: 4, size: 27, bold: true },
  { name: '默认段落字体', size: 20, char: true },
  { name: '正文', size: 20, selected: true },
]

const ReturnMark = () => (
  <svg width="14" height="24" viewBox="0 0 14 24" aria-hidden="true">
    <path d="M12.500 1v7l-2 2H3" fill="none" stroke="#000" strokeWidth="1.300" />
    <path d="M0 10l4.500-3.500v7z" />
  </svg>
)

const StylesPanel = () => {
  const [preview, setPreview] = useState(true)

  return (
    <Panel>
      <PanelHead>
        <h2>样式和格式<Caret /></h2>
        <QuickButton aria-label="固定"><Icon name="pin" size={24} /></QuickButton>
        <QuickButton aria-label="关闭窗格"><Icon name="close" /></QuickButton>
      </PanelHead>
      <SelectWrap $boxed="4px" $large $height="48px" $inset={8} $end={12}>
        <select aria-label="当前样式"><option>正文</option></select>
        <Caret $big />
      </SelectWrap>
      <PanelButtons>
        <PlainButton>新样式...</PlainButton>
        <PlainButton>清除格式</PlainButton>
      </PanelButtons>
      <ListLabel>请选择要应用的格式</ListLabel>
      <StyleList>
        {styleItems.map(({ name, level, size, bold, char, selected }) => (
          <StyleItem key={name + (level || '')} $size={size} $bold={bold} $selected={selected}>
            <span>{name}{level && <b>{level}</b>}</span>
            {char ? <CharMark>a</CharMark> : <ReturnMark />}
          </StyleItem>
        ))}
      </StyleList>
      <Field $top={7}>
        <label htmlFor="filter">显示:</label>
        <SelectWrap $boxed="0" $grow $height="30px" $inset={3} $end={9}>
          <select id="filter"><option>有效样式</option></select>
          <Caret />
        </SelectWrap>
      </Field>
      <Field $top={13}>
        <label>
          <Check type="checkbox" checked={preview} onChange={() => setPreview(!preview)} />
          显示预览
        </label>
        <SmartLink href="#smart">
          <svg width="18" height="16" viewBox="0 0 18 16" fill="#ff960f" aria-hidden="true">
            <path d="M0 5l5 2 4-6 4 6 5-2-2 10H2z" />
          </svg>
          智能排版
        </SmartLink>
      </Field>
    </Panel>
  )
}

/* ---------- side bar ---------- */

const SideBar = styled.nav`
  width: 64px;
  padding: 15px 2px 0 0;
  display: flex;
  flex-direction: column;
  align-items: center;
  gap: 6px;
`

const Grip = styled.i`
  width: 30px;
  height: 6px;
  margin-bottom: 14px;
  border: solid #d0d2d6;
  border-width: 1px 0;
`

const SideButton = styled.button`
  width: 48px;
  height: 48px;
  display: grid;
  place-items: center;
  border-radius: 4px;
  color: ${({ $soft }) => ($soft ? '#44506b' : colors.ink)};
  background: ${({ $on }) => ($on ? '#d9dde5' : 'none')};
`

const SideFoot = styled.div`
  width: 58px;
  height: 68px;
  margin-top: auto;
  padding-top: 28px;
  display: grid;
  justify-items: center;
  align-content: start;
  border-top: 1px solid ${colors.line};
`

const sideTools = [
  ['rocket', '快捷'], ['pen', '样式和格式'], ['arrow', '选择窗格'], ['sliders', '属性'],
  ['help', '帮助'], ['store', '稻壳资源'], ['bulb', '灵感'], ['bookSearch', '查阅'],
]

const Side = () => (
  <SideBar aria-label="侧边栏">
    <Grip />
    {sideTools.map(([icon, label], i) => (
      <SideButton key={icon} $on={i === 1} $soft={i === 0} aria-label={label}><Icon name={icon} /></SideButton>
    ))}
    <SideFoot>
      <QuickButton aria-label="更多"><Icon name="dots" weight={2} /></QuickButton>
    </SideFoot>
  </SideBar>
)

/* ---------- status bar ---------- */

const StatusBar = styled.footer`
  position: relative;
  height: 44px;
  padding: 0 16px 0 14px;
  display: flex;
  align-items: center;
  border-top: 1px solid #dfe2e7;
  border-bottom: 2px solid #bdbebf;
  white-space: nowrap;
`

const StatusButton = styled.button`
  height: 36px;
  display: flex;
  align-items: center;
  gap: 5px;
  padding: 0 5px 0 6px;
  background: ${({ $on }) => ($on ? '#e7f1fb' : 'none')};
`

const Views = styled.div`
  margin-left: auto;
  display: flex;
  align-items: center;
  gap: 3px;
`

const ViewButton = styled.button`
  width: 36px;
  height: 36px;
  display: grid;
  place-items: center;
  border-radius: 3px;
  color: ${colors.ink};
  background: ${({ $on }) => ($on ? '#dae0e8' : 'none')};
`

const ZoomLevel = styled.button`
  display: flex;
  align-items: center;
  gap: 7px;
  margin: 0 17px 0 4px;
  font-size: 20px;
  color: ${colors.soft};
`

const ZoomStep = styled.button`
  color: #36425c;
`

const Slider = styled.input`
  appearance: none;
  width: 208px;
  height: 20px;
  margin: 0 16px 0 17px;
  background: linear-gradient(to right, #36425c 100px, #dcdfe6 100px) center / 100% 1px no-repeat;

  &::-webkit-slider-thumb {
    appearance: none;
    width: 19px;
    height: 19px;
    border: 2px solid #45484e;
    border-radius: 50%;
    background: #ededee;
  }
`

const FullScreen = styled(ViewButton)`
  margin-left: 13px;
`

const Watermark = styled.span`
  position: absolute;
  right: 14px;
  bottom: 4px;
  color: #8f9093;
  font: 300 18px/24px Roboto, sans-serif;
  text-shadow: 1px 1px 0 rgba(255, 255, 255, 0.8);
  pointer-events: none;
`

const Status = () => {
  const [zoom, setZoom] = useState(49)

  return (
    <StatusBar>
      <span>页面: 1/1</span>
      <Rule $height={22} $margin="0 13px 0 9px" />
      <span>字数: 15</span>
      <Rule $height={22} $margin="0 0 0 8px" />
      <StatusButton $on><Icon name="spell" />拼写检查</StatusButton>
      <Caret $color={colors.caret} />
      <Rule $height={22} $margin="0 6px 0 8px" />
      <StatusButton><Icon name="proof" />文档校对</StatusButton>
      <Rule $height={22} $margin="0 0 0 10px" />
      <Views>
        <ViewButton aria-label="护眼模式"><Icon name="eye" /></ViewButton>
        <Rule $height={22} $margin="0 7px" />
        <ViewButton $on aria-label="页面视图"><Icon name="pageView" /></ViewButton>
        <ViewButton aria-label="大纲"><Icon name="outlineView" /></ViewButton>
        <ViewButton aria-label="阅读版式"><Icon name="book" /></ViewButton>
        <ViewButton aria-label="Web版式"><Icon name="globe" /></ViewButton>
        <ViewButton aria-label="写作模式"><Icon name="write" /></ViewButton>
        <Rule $height={22} $margin="0 7px" />
        <ViewButton aria-label="适应窗口"><Icon name="fit" /></ViewButton>
      </Views>
      <ZoomLevel>100%<Caret /></ZoomLevel>
      <ZoomStep aria-label="缩小">
        <svg width="16" height="16" viewBox="0 0 16 16" aria-hidden="true"><path d="M0 8h16" stroke="currentColor" strokeWidth="4" /></svg>
      </ZoomStep>
      <Slider type="range" aria-label="显示比例" value={zoom} onChange={e => setZoom(e.target.value)} />
      <ZoomStep aria-label="放大">
        <svg width="16" height="16" viewBox="0 0 16 16" aria-hidden="true"><path d="M0 8h16M8 0v16" stroke="currentColor" strokeWidth="4" /></svg>
      </ZoomStep>
      <FullScreen aria-label="全屏"><Icon name="full" /></FullScreen>
      <Watermark>CSDN @m0_74421005</Watermark>
    </StatusBar>
  )
}

const App = () => (
  <Window>
    <GlobalStyle />
    <Title />
    <Menu />
    <Ribbon />
    <Main>
      <Document />
      <Scroll />
      <StylesPanel />
      <Side />
    </Main>
    <Status />
  </Window>
)

export default App
